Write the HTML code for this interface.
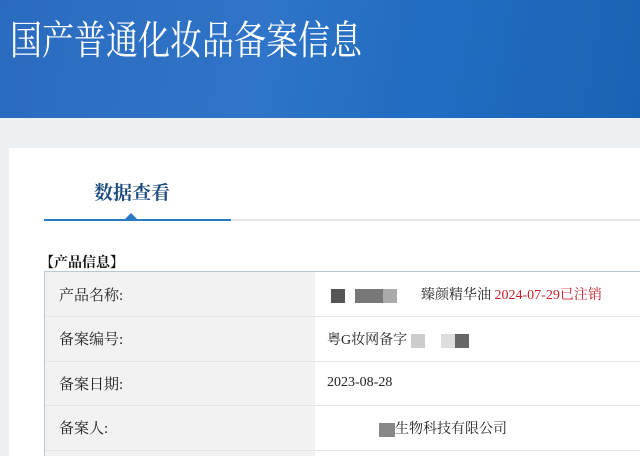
<!DOCTYPE html>
<html><head><meta charset="utf-8"><style>
*{margin:0;padding:0;box-sizing:border-box}
html,body{width:640px;height:456px;overflow:hidden}
body{background:#eef1f4;font-family:"Liberation Serif","Noto Serif CJK SC",serif;position:relative}
.hdr{position:absolute;left:0;top:0;width:640px;height:118px;background:linear-gradient(100deg,#2a6bbf 0%,#2f74c8 40%,#1f6cc0 70%,#1a62b4 100%)}
.hdr h1{position:absolute;left:10px;top:20px;font-family:"Liberation Serif","Noto Serif CJK SC",serif;font-weight:normal;color:#fff;font-size:32px;line-height:1;transform:scaleY(1.25);transform-origin:left top;white-space:nowrap}
.card{position:absolute;left:9px;top:148px;width:631px;height:308px;background:#fff}
.tab{position:absolute;left:94px;top:178px;font-size:19px;color:#1d4c7e;font-weight:bold}
.line{position:absolute;left:44px;top:219px;width:596px;height:2px;background:#e2e6ea}
.line2{position:absolute;left:44px;top:219px;width:187px;height:2px;background:#2b7ac4}
.tri{position:absolute;left:125px;top:213px;width:0;height:0;border-left:6px solid transparent;border-right:6px solid transparent;border-bottom:6px solid #2b7ac4}
.sec{position:absolute;left:40px;top:252px;font-size:14px;font-weight:bold;color:#111}
.tw{position:absolute;left:44px;top:271px;width:596px;height:185px;overflow:hidden;border-top:1px solid #b8c8d8;border-left:1px solid #b8c8d8}
.tw::before{content:"";position:absolute;left:0;top:0;width:270px;height:185px;background:#f2f2f2}
table{position:relative;width:600px;border-collapse:collapse}
td{height:44.5px;font-size:14px;color:#222;border-bottom:1px solid #e4e4e4;vertical-align:middle}
td.l{width:270px;background:#f2f2f2;padding-left:14px;font-size:15px}
td.v{padding-left:12px}
.red{color:#c8202a}
.b{display:inline-block;height:14px;vertical-align:middle}
</style></head><body>
<div class="hdr"><h1>国产普通化妆品备案信息</h1></div>
<div class="card"></div>
<div class="tab">数据查看</div>
<div class="line"></div><div class="line2"></div><div class="tri"></div>
<div class="sec">【产品信息】</div>
<div class="tw"><table>
<tr><td class="l">产品名称:</td><td class="v"><span class="b" style="width:14px;background:#555;margin-left:4px"></span><span class="b" style="width:28px;background:#777;margin-left:10px"></span><span class="b" style="width:14px;background:#aaa"></span><span style="margin-left:24px">臻颜精华油 </span><span class="red">2024-07-29已注销</span></td></tr>
<tr><td class="l">备案编号:</td><td class="v">粤G妆网备字 <span class="b" style="width:14px;background:#ccc"></span><span class="b" style="width:14px;background:#ddd;margin-left:16px"></span><span class="b" style="width:14px;background:#666"></span></td></tr>
<tr><td class="l">备案日期:</td><td class="v">2023-08-28</td></tr>
<tr><td class="l">备案人:</td><td class="v"><span class="b" style="width:16px;background:#888;margin-left:52px"></span>生物科技有限公司</td></tr>
</table></div>
</body></html>
